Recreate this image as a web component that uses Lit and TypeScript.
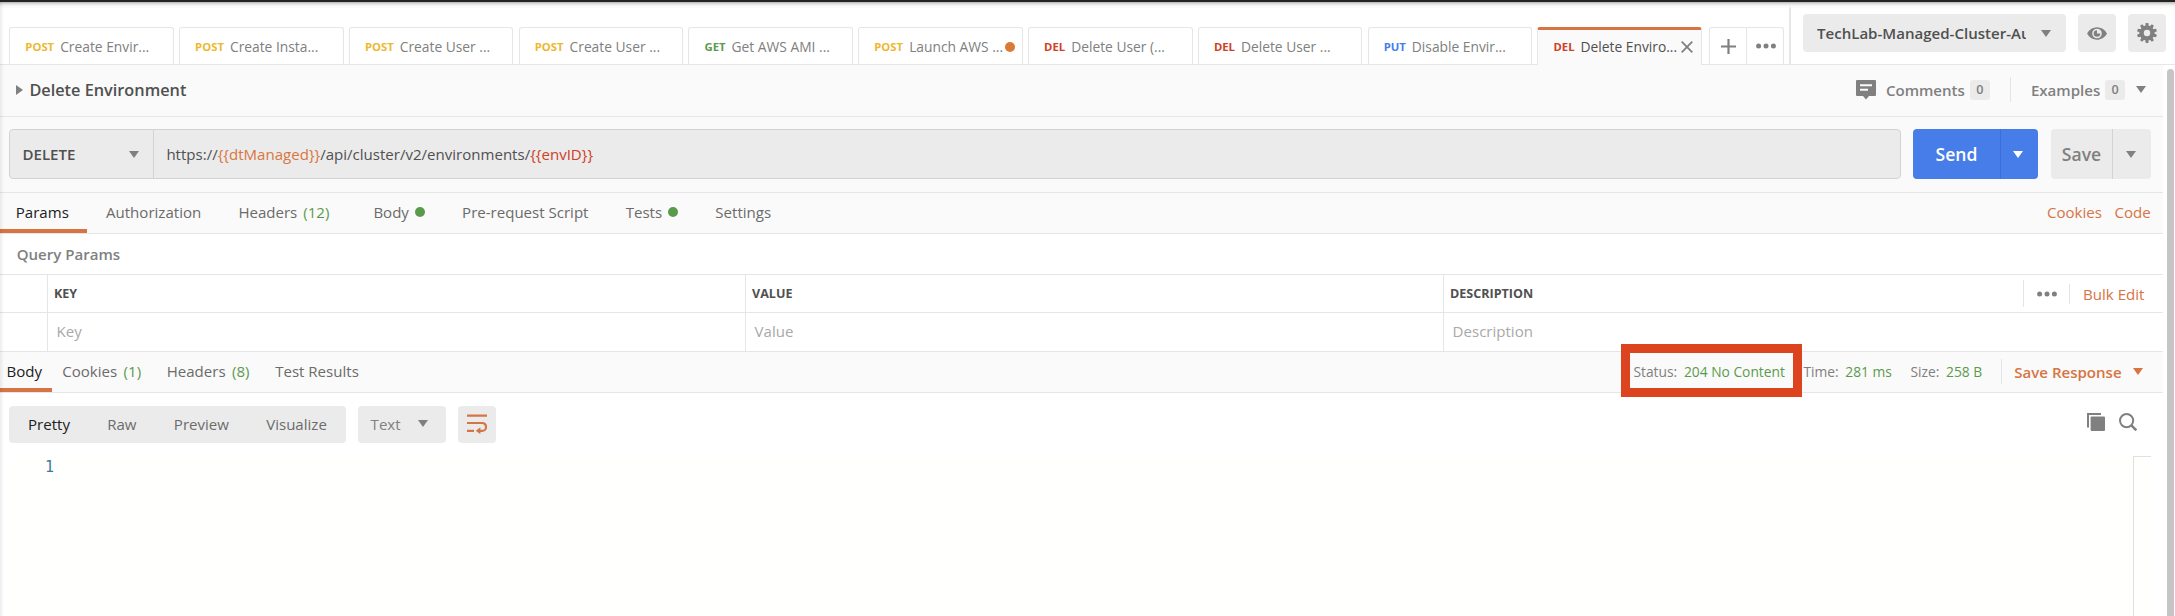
import { LitElement, html, css, svg } from "lit";
import { customElement } from "lit/decorators.js";
import { classMap } from "lit/directives/class-map.js";

interface RequestTab {
  method: "POST" | "GET" | "DEL" | "PUT";
  name: string;
  dirty?: boolean;
  active?: boolean;
}

const TABS: RequestTab[] = [
  { method: "POST", name: "Create Envir..." },
  { method: "POST", name: "Create Insta..." },
  { method: "POST", name: "Create User ..." },
  { method: "POST", name: "Create User ..." },
  { method: "GET", name: "Get AWS AMI ..." },
  { method: "POST", name: "Launch AWS ...", dirty: true },
  { method: "DEL", name: "Delete User (..." },
  { method: "DEL", name: "Delete User ..." },
  { method: "PUT", name: "Disable Envir..." },
  { method: "DEL", name: "Delete Enviro...", active: true },
];

const caret = html`<svg class="caret" width="10" height="7" viewBox="0 0 10 7"><path d="M0 0H10L5 7Z" fill="currentColor" /></svg>`;

const dots = html`<svg class="dots" width="20" height="6" viewBox="0 0 20 6">
  ${[2.6, 10, 17.4].map((x) => svg`<circle cx=${x} cy="3" r="2.5" fill="currentColor" />`)}
</svg>`;

const teeth = Array.from({ length: 10 }, (_, i) => i * 36);

@customElement("app-root")
export class AppRoot extends LitElement {
  static styles = css`
    :host {
      display: block;
      position: relative;
      height: 616px;
      overflow: hidden;
      background: #fff;
      color: #505050;
      font: 15.06px/20px "Open Sans", sans-serif;
      white-space: nowrap;
    }
    * { box-sizing: border-box; }
    svg { display: block; flex: none; }
    .chrome {
      position: absolute;
      inset: 0 0 auto 0;
      height: 9px;
      background: linear-gradient(#262323 0 2px, #b5b5b5 2px, #e2e2e2 4px, #f8f8f8 6px, rgba(255, 255, 255, 0) 9px);
    }
    .edge {
      position: absolute;
      inset: 2px auto 0 0;
      width: 4px;
      background: linear-gradient(90deg, rgba(0, 0, 0, 0.07), rgba(0, 0, 0, 0));
    }
    .topbar { display: flex; height: 65px; border-bottom: 1px solid #e6e6e6; }
    .tabs { display: flex; flex: none; width: 1789px; padding: 27px 0 0 9.3px; }
    .tab {
      flex: none;
      display: flex;
      align-items: center;
      width: 164.5px;
      height: 37px;
      margin-right: 5.3px;
      padding: 2px 0 0 15px;
      border: 1px solid #e6e6e6;
      border-bottom: 0;
      border-radius: 3px 3px 0 0;
      color: #808080;
      font-size: 13.8px;
    }
    .tab.active {
      height: 38px;
      border-top: 3px solid #d67443;
      padding: 0 0 1px 15px;
      background: #fafafa;
      color: #505050;
    }
    .method { margin-right: 6px; font-size: 11.3px; font-weight: 700; }
    .POST { color: #edb82f; }
    .GET { color: #5a9a4c; }
    .DEL { color: #ce4025; }
    .PUT { color: #467de8; }
    .dirty { width: 10px; height: 10px; margin-left: 2px; border-radius: 50%; background: #d97b36; }
    .close { margin-left: 3.5px; color: #808080; }
    .tabtools {
      display: flex;
      width: 75px;
      height: 37px;
      margin-left: 2px;
      border: 1px solid #e6e6e6;
      border-bottom: 0;
      border-radius: 3px 3px 0 0;
      color: #808080;
    }
    .tabtools > span { flex: 1; display: flex; align-items: center; justify-content: center; }
    .tabtools > span + span { border-left: 1px solid #e6e6e6; padding-left: 1px; }
    .env { flex: 1; display: flex; padding: 14px 0 0 12px; border-left: 2px solid #e6e6e6; color: #808080; }
    .select {
      display: flex;
      align-items: center;
      width: 263px;
      height: 38px;
      padding-left: 14px;
      border-radius: 4px;
      background: #ebebeb;
    }
    .envname { width: 209px; margin-right: 15px; overflow: hidden; color: #505050; font-weight: 600; }
    .iconbtn {
      display: flex;
      align-items: center;
      justify-content: center;
      width: 38px;
      height: 38px;
      margin-left: 12px;
      border-radius: 4px;
      background: #ebebeb;
    }
    .content { display: flex; height: 551px; }
    .main { width: 2163px; display: flex; flex-direction: column; }
    .scroll { width: 7px; margin: 4px 0 0 4px; background: #c5c5c5; border-radius: 4px 4px 0 0; }
    .head {
      display: flex;
      align-items: center;
      height: 52px;
      padding: 0 17.3px 2px 16px;
      border-bottom: 1px solid #e6e6e6;
      background: #fafafa;
      color: #808080;
      font-weight: 600;
    }
    .title { margin-left: 6.4px; color: #505050; font-size: 16.3px; }
    .comment { margin: 0 10.4px 0 auto; }
    .count {
      width: 20px;
      height: 20px;
      margin-left: 5px;
      border-radius: 3px;
      background: #ebebeb;
      font-size: 12.6px;
      line-height: 19px;
      text-align: center;
    }
    .vline { width: 1px; height: 25px; margin: 0 20px; background: #e4e4e4; }
    .head .caret { margin-left: 10.5px; }
    .request {
      display: flex;
      height: 76px;
      padding: 12px 12px 0 9px;
      border-bottom: 1px solid #e6e6e6;
      background: #fafafa;
    }
    .urlbar {
      display: flex;
      width: 1892px;
      height: 50px;
      border: 1px solid #d3d3d3;
      border-radius: 4px;
      background: #ebebeb;
    }
    .verb {
      display: flex;
      align-items: center;
      justify-content: space-between;
      width: 144px;
      padding: 0 14px 0 12.5px;
      border-right: 1px solid #d3d3d3;
      font-weight: 600;
    }
    .verb .caret { color: #808080; }
    .url { display: flex; align-items: center; padding-left: 12.4px; }
    .var { color: #d9763f; }
    .missing { color: #ce4025; }
    .split { display: flex; height: 50px; border-radius: 4px; font-size: 17.57px; font-weight: 600; }
    .split > span { display: flex; align-items: center; justify-content: center; }
    .send { width: 125px; margin-left: 12px; background: #467de8; color: #fff; }
    .send > :first-child { width: 87px; }
    .send > :last-child { flex: 1; border-left: 1px solid #3c6fd8; padding-right: 3px; }
    .save { width: 100px; margin-left: 13px; background: #ebebeb; color: #808080; }
    .save > :first-child { width: 61px; }
    .save > :last-child { flex: 1; border-left: 1px solid #d3d3d3; padding-right: 2px; }
    .subtabs {
      display: flex;
      height: 41px;
      border-bottom: 1px solid #e6e6e6;
      background: #fafafa;
      color: #6b6b6b;
    }
    .subtab { display: flex; align-items: center; padding: 0 18.6px 2px; }
    .subtab.on { color: #212121; border-bottom: 4px solid #d67443; padding-top: 2px; padding-bottom: 0; }
    .params .on { padding-left: 15.8px; }
    .num { margin-left: 6px; color: #5a9a4c; }
    .wide { margin-right: 6.8px; }
    .bullet { width: 10px; height: 10px; margin-left: 6px; border-radius: 50%; background: #5a9a4c; }
    .links { display: flex; align-items: center; gap: 12.6px; margin-left: auto; padding: 0 12.4px 2px 0; color: #d67443; }
    .subhead { height: 40px; padding: 10px 16.7px; color: #808080; font-weight: 600; }
    .grid { display: grid; grid-template-columns: 47px 698px 698px 1fr; grid-template-rows: 38px 39px; }
    .cell { display: flex; align-items: center; border-top: 1px solid #e6e6e6; }
    .cell + .cell:not(.first) { border-left: 1px solid #e6e6e6; }
    .label { padding-left: 6px; color: #505050; font-size: 12.55px; font-weight: 700; }
    .field { padding: 0 0 2px 8.6px; color: #a9a9a9; }
    .bulk {
      display: flex;
      align-items: center;
      margin-left: auto;
      padding-right: 18.6px;
      color: #d67443;
      font: 400 15.06px/20px "Open Sans", sans-serif;
    }
    .bulk span { padding-top: 1px; }
    .bulk .dots { margin: 0 12px 0 13px; color: #808080; }
    .bulk .tall { width: 1px; height: 27px; background: #e4e4e4; }
    .bulk .short { width: 1px; height: 20px; margin-right: 13.4px; background: #e4e4e4; }
    .response { border-top: 1px solid #e6e6e6; height: 42px; }
    .response .subtab { padding: 0 12.8px 1.4px; }
    .response .subtab.on { width: 52px; padding: 4px 0 1.4px 6.6px; margin-right: -2.6px; }
    .response .num { margin-left: 6.5px; }
    .meta {
      position: relative;
      display: flex;
      align-items: center;
      margin-left: auto;
      padding: 0 20px 1px 0;
      color: #808080;
      font-size: 13.8px;
    }
    .meta .val { margin: 0 18.5px 0 6.7px; color: #5a9a4c; }
    .meta .saver { display: flex; align-items: center; gap: 11.4px; color: #d67443; font-size: 15.06px; font-weight: 600; }
    .meta .vline { margin: 0 12.6px 0 0; }
    .callout {
      position: absolute;
      left: -12px;
      top: -8px;
      width: 181px;
      height: 53px;
      border: 9px solid #db441e;
    }
    .toolbar { display: flex; align-items: center; height: 63px; padding: 13px 26px 13px 9px; color: #6b6b6b; }
    .seg { display: flex; align-items: center; height: 37px; padding-bottom: 2px; border-radius: 4px; background: #ebebeb; }
    .modes { width: 337px; gap: 37.3px; padding-left: 19px; }
    .modes .on { color: #212121; }
    .lang { width: 88px; margin-left: 12px; padding-left: 12.6px; gap: 17.4px; color: #808080; }
    .wrap { width: 38px; margin-left: 12px; justify-content: center; color: #d67443; }
    .tools { display: flex; gap: 14px; margin-left: auto; margin-top: -6px; color: #808080; }
    .editor { flex: 1; display: flex; margin-left: 9px; margin-right: 12px; background: #fffffe; }
    .line { width: 45px; padding-top: 1px; text-align: right; color: #3f7a94; font: 15px/20px "DejaVu Sans Mono", monospace; }
    .minimap { width: 18px; margin-left: auto; border: solid #e0e0e0; border-width: 1px 0 0 1px; }
  `;

  private tab(t: RequestTab) {
    return html`<div class=${classMap({ tab: true, active: !!t.active })}>
      <span class="method ${t.method}">${t.method}</span><span>${t.name}</span>
      ${t.dirty ? html`<i class="dirty"></i>` : ""}
      ${t.active
        ? html`<svg class="close" width="12" height="12" viewBox="0 0 12 12"><path d="M.7.7 11.3 11.3M11.3.7.7 11.3" stroke="currentColor" stroke-width="1.8" /></svg>`
        : ""}
    </div>`;
  }

  render() {
    return html`
      <div class="topbar">
        <div class="tabs">
          ${TABS.map((t) => this.tab(t))}
          <div class="tabtools">
            <span><svg width="15" height="15" viewBox="0 0 15 15"><path d="M7.5 0V15M0 7.5H15" stroke="currentColor" stroke-width="2.2" /></svg></span>
            <span>${dots}</span>
          </div>
        </div>
        <div class="env">
          <div class="select"><span class="envname">TechLab-Managed-Cluster-Au</span>${caret}</div>
          <div class="iconbtn">
            <svg width="20" height="13" viewBox="0 0 20 13">
              <path fill-rule="evenodd" fill="currentColor" d="M0 6.5C4.5-1.8 15.5-1.8 20 6.5C15.5 14.8 4.5 14.8 0 6.5ZM10 1.7a4.8 4.8 0 1 0 0 9.6a4.8 4.8 0 1 0 0-9.6Z" />
              <path fill="currentColor" d="M10 3.2a3.3 3.3 0 1 0 3.3 3.3H10Z" />
            </svg>
          </div>
          <div class="iconbtn">
            <svg width="20" height="20" viewBox="0 0 20 20">
              <circle cx="10" cy="10" r="5.4" fill="none" stroke="currentColor" stroke-width="4.4" />
              ${teeth.map((a) => svg`<path d="M8.2 3.5 8.7 0H11.3L11.8 3.5Z" fill="currentColor" transform="rotate(${a} 10 10)" />`)}
            </svg>
          </div>
        </div>
      </div>

      <div class="content">
        <div class="main">
          <div class="head">
            <svg width="7" height="10" viewBox="0 0 7 10"><path d="M0 0 7 5 0 10Z" fill="#808080" /></svg>
            <span class="title">Delete Environment</span>
            <svg class="comment" width="20" height="20" viewBox="0 0 20 20">
              <path fill="currentColor" d="M1 0H19Q20 0 20 1V15Q20 16 19 16H13L10 19.6 7 16H1Q0 16 0 15V1Q0 0 1 0Z" />
              <path d="M4 5.2H16M4 9.8H12" stroke="#fafafa" stroke-width="2" />
            </svg>
            <span>Comments</span><span class="count">0</span>
            <i class="vline"></i>
            <span>Examples</span><span class="count">0</span>${caret}
          </div>

          <div class="request">
            <div class="urlbar">
              <div class="verb">DELETE${caret}</div>
              <div class="url">https://<span class="var">{{dtManaged}}</span>/api/cluster/v2/environments/<span class="missing">{{envID}}</span></div>
            </div>
            <div class="split send"><span>Send</span><span>${caret}</span></div>
            <div class="split save"><span>Save</span><span>${caret}</span></div>
          </div>

          <div class="subtabs params">
            <div class="subtab on">Params</div>
            <div class="subtab">Authorization</div>
            <div class="subtab wide">Headers<span class="num">(12)</span></div>
            <div class="subtab">Body<i class="bullet"></i></div>
            <div class="subtab">Pre-request Script</div>
            <div class="subtab">Tests<i class="bullet"></i></div>
            <div class="subtab">Settings</div>
            <div class="links"><span>Cookies</span><span>Code</span></div>
          </div>

          <div class="subhead">Query Params</div>
          <div class="grid">
            <div class="cell"></div>
            <div class="cell label">KEY</div>
            <div class="cell label">VALUE</div>
            <div class="cell label">DESCRIPTION
              <div class="bulk"><i class="tall"></i>${dots}<i class="short"></i><span>Bulk Edit</span></div>
            </div>
            <div class="cell first"></div>
            <div class="cell field">Key</div>
            <div class="cell field">Value</div>
            <div class="cell field">Description</div>
          </div>

          <div class="subtabs response">
            <div class="subtab on">Body</div>
            <div class="subtab">Cookies<span class="num">(1)</span></div>
            <div class="subtab">Headers<span class="num">(8)</span></div>
            <div class="subtab">Test Results</div>
            <div class="meta">
              <span>Status:</span><span class="val">204 No Content</span>
              <span>Time:</span><span class="val">281 ms</span>
              <span>Size:</span><span class="val">258 B</span>
              <i class="vline"></i>
              <span class="saver">Save Response${caret}</span>
              <div class="callout"></div>
            </div>
          </div>

          <div class="toolbar">
            <div class="seg modes"><span class="on">Pretty</span><span>Raw</span><span>Preview</span><span>Visualize</span></div>
            <div class="seg lang"><span>Text</span>${caret}</div>
            <div class="seg wrap">
              <svg width="20" height="20" viewBox="0 0 20 20" fill="none" stroke="currentColor" stroke-width="2.2">
                <path d="M0 1.6H20M0 9H15.2a3.9 3.9 0 0 1 0 7.8H12M0 16.8H7" />
                <path d="M13.4 13.2V20.2L8.8 16.8Z" fill="currentColor" stroke="none" />
              </svg>
            </div>
            <div class="tools">
              <svg width="18" height="18" viewBox="0 0 18 18">
                <path d="M1 14.5V1H14" fill="none" stroke="currentColor" stroke-width="2" />
                <rect x="3.6" y="3.4" width="14.4" height="14.6" rx="1" fill="currentColor" />
              </svg>
              <svg width="18" height="18" viewBox="0 0 18 18" fill="none" stroke="currentColor" stroke-width="2">
                <circle cx="7.6" cy="7.6" r="6.6" /><path d="M12.2 12.2 17.3 17.3" stroke-width="2.6" />
              </svg>
            </div>
          </div>

          <div class="editor"><div class="line">1</div><div class="minimap"></div></div>
        </div>
        <div class="scroll"></div>
      </div>
      <div class="chrome"></div>
      <div class="edge"></div>
    `;
  }
}
